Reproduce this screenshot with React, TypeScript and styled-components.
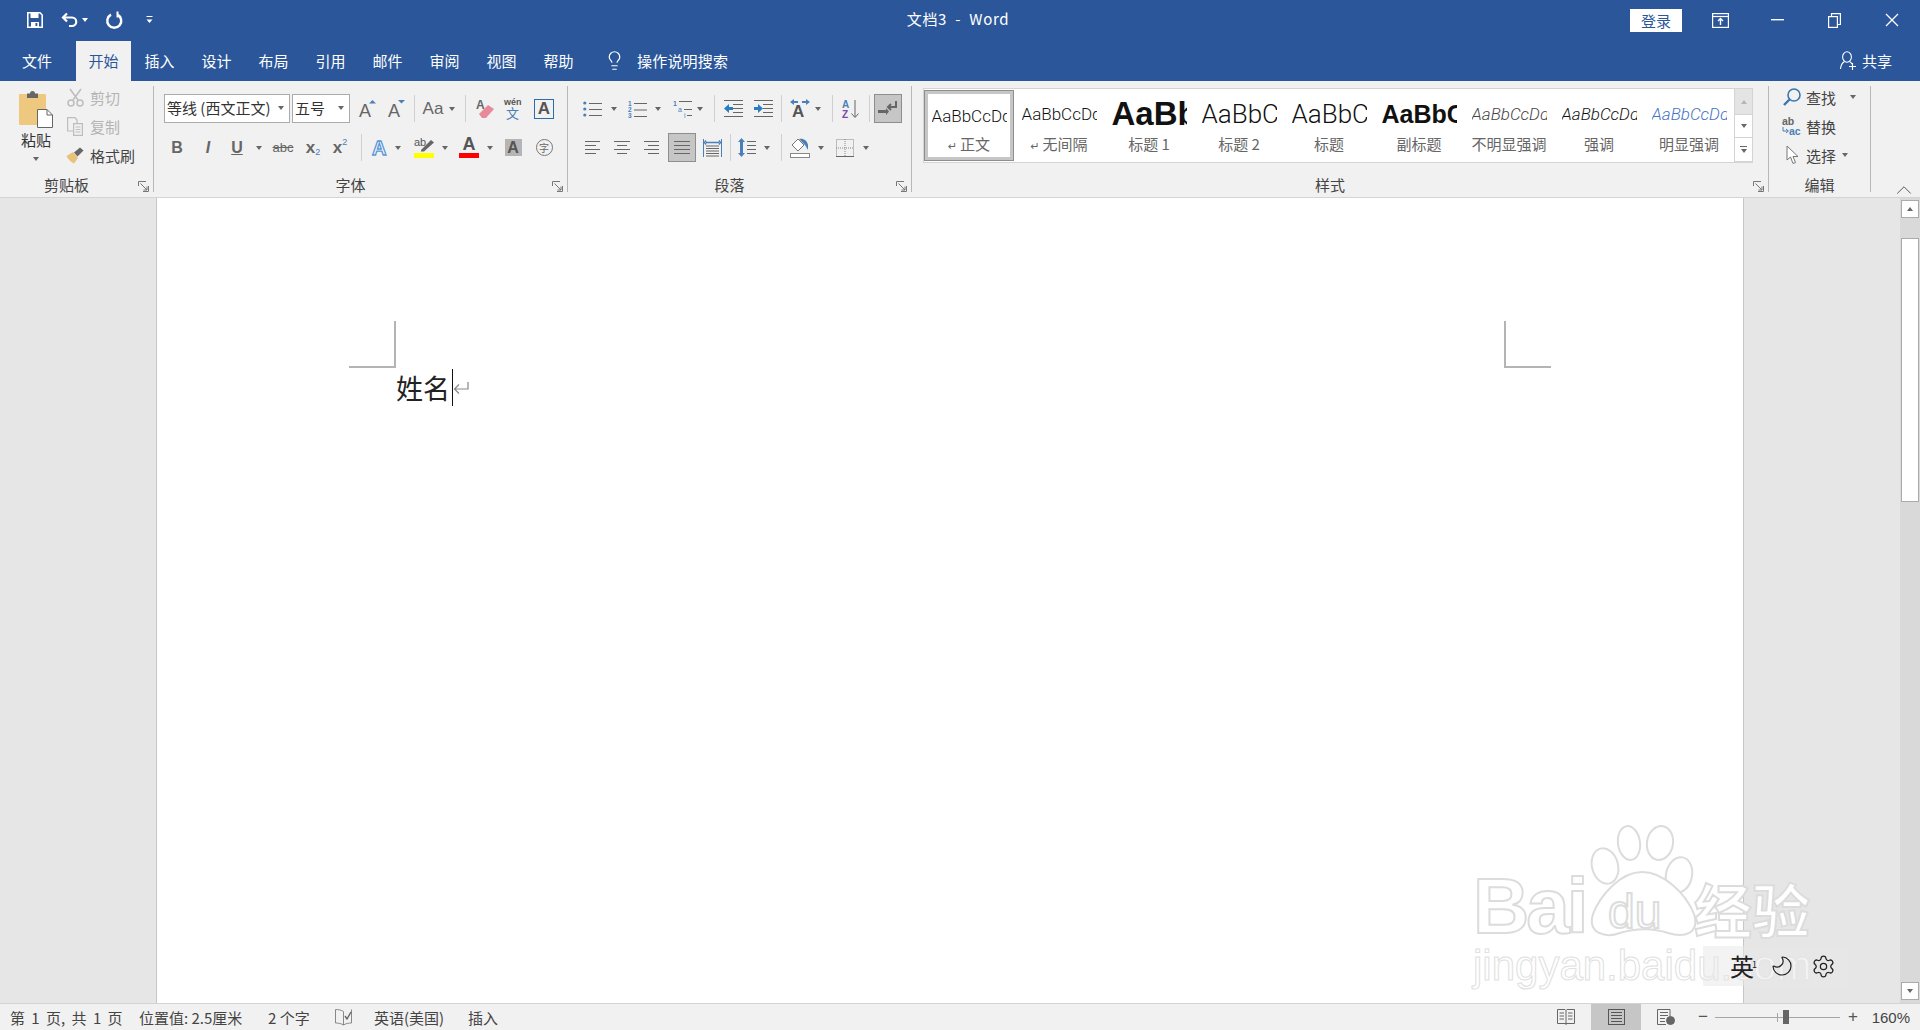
import React from 'react'
import styled, { createGlobalStyle } from 'styled-components'
import { Lightbulb, ChevronUp, Moon, Settings } from 'lucide-react'

const CJK = '"Noto Sans CJK SC", "Liberation Sans", sans-serif'
const LATIN = '"Liberation Sans", "Noto Sans CJK SC", sans-serif'
const GREY = '#666666'
const BLUE = '#4a80b8'

const Global = createGlobalStyle`
  html, body { margin: 0; padding: 0; height: 100%; overflow: hidden; }
  #root { height: 100vh; }
  * { box-sizing: border-box; }
  svg { overflow: visible; }
`

const Shell = styled.div`
  height: 100vh;
  display: flex;
  flex-direction: column;
  font-family: ${CJK};
  font-size: 15px;
  color: #444;
  background: #e6e6e6;
`

/* title bar */
const TitleBar = styled.div`
  height: 40px;
  background: #2b579a;
  color: #fff;
  display: flex;
  align-items: center;
  position: relative;
`
const QatBtn = styled.div<{ $w: number; $ml?: number }>`
  width: ${(p) => p.$w}px;
  margin-left: ${(p) => p.$ml || 0}px;
  display: flex;
  justify-content: center;
  align-items: center;
`
const Title = styled.div`
  position: absolute;
  left: 0;
  top: 9px;
  width: 1916px;
  text-align: center;
  font-size: 15px;
  line-height: 20px;
  font-family: ${CJK};
  letter-spacing: 0.7px;
`
const WindowControls = styled.div`
  margin-left: auto;
  display: flex;
  align-items: center;
`
const SignIn = styled.div`
  width: 52px;
  height: 23px;
  margin-right: 10px;
  background: #fff;
  color: #2b579a;
  display: flex;
  align-items: center;
  justify-content: center;
  font-size: 15px;
`
const WinBtn = styled.div`
  width: 57px;
  display: flex;
  justify-content: center;
`

/* tabs */
const TabRow = styled.div`
  height: 41px;
  background: #2b579a;
  display: flex;
  align-items: flex-end;
  color: #fff;
`
const Tab = styled.div<{ $active?: boolean; $first?: boolean }>`
  width: ${(p) => (p.$first ? 74 : 55)}px;
  margin: ${(p) => (p.$first ? '0 1px 0 0' : p.$active ? '0 0 0 1px' : '0 1px')};
  height: 40px;
  padding-bottom: 2px;
  display: flex;
  align-items: center;
  justify-content: center;
  background: ${(p) => (p.$active ? '#f1f1f1' : 'transparent')};
  color: ${(p) => (p.$active ? '#2b579a' : '#fff')};
`
const Search = styled.div`
  margin-left: 17px;
  height: 40px;
  padding-bottom: 2px;
  display: flex;
  align-items: center;
  gap: 12px;
  letter-spacing: 0.2px;
`
const Share = styled.div`
  margin-left: auto;
  padding-right: 28px;
  height: 40px;
  padding-bottom: 1px;
  display: flex;
  align-items: center;
  gap: 5px;
`

/* ribbon */
const Ribbon = styled.div`
  height: 117px;
  background: #f1f1f1;
  border-bottom: 1px solid #d4d4d4;
  display: flex;
  padding-top: 5px;
`
const Group = styled.div<{ $w: number }>`
  width: ${(p) => p.$w}px;
  height: 106px;
  border-right: 1px solid #b8b8b8;
  display: flex;
  flex-direction: column;
  flex: none;
`
const GroupBody = styled.div<{ $pl?: number; $pt?: number }>`
  flex: 1;
  min-height: 0;
  display: flex;
  padding-left: ${(p) => p.$pl || 0}px;
  padding-top: ${(p) => p.$pt || 0}px;
`
const GroupFoot = styled.div`
  height: 12px;
  display: flex;
  align-items: center;
`
const GroupLabel = styled.div`
  flex: 1;
  text-align: center;
  line-height: 10px;
  height: 12px;
  color: #444;
`
const Launcher = styled.div`
  width: 20px;
  display: flex;
  justify-content: center;
`
const ToolRows = styled.div`
  display: flex;
  flex-direction: column;
  gap: 10px;
`
const ToolRow = styled.div`
  display: flex;
  align-items: center;
  height: 29px;
`
const ToolBtn = styled.div<{ $w: number; $ml?: number; $on?: boolean }>`
  width: ${(p) => p.$w}px;
  height: 29px;
  margin-left: ${(p) => p.$ml || 0}px;
  flex: none;
  display: flex;
  align-items: center;
  justify-content: center;
  background: ${(p) => (p.$on ? '#c6c6c6' : 'transparent')};
  border: ${(p) => (p.$on ? '1px solid #8e8e8e' : 'none')};
`
const CaretBox = styled.div<{ $w?: number; $ml?: number }>`
  width: ${(p) => p.$w || 10}px;
  margin-left: ${(p) => p.$ml || 0}px;
  flex: none;
  display: flex;
  align-items: center;
  justify-content: center;
`
const Caret = styled.span<{ $up?: boolean; $color?: string }>`
  display: block;
  flex: none;
  width: 0;
  height: 0;
  border-left: 3.5px solid transparent;
  border-right: 3.5px solid transparent;
  ${(p) => (p.$up ? 'border-bottom' : 'border-top')}: 4px solid ${(p) => p.$color || GREY};
`
const Sep = styled.div<{ $ml?: number; $mr?: number }>`
  width: 1px;
  height: 27px;
  flex: none;
  margin-left: ${(p) => p.$ml || 0}px;
  margin-right: ${(p) => p.$mr || 0}px;
  background: #cfcfcf;
`
const Combo = styled.div<{ $w: number; $ml?: number }>`
  width: ${(p) => p.$w}px;
  margin-left: ${(p) => p.$ml || 0}px;
  height: 29px;
  flex: none;
  background: #fff;
  border: 1px solid #ababab;
  display: flex;
  align-items: center;
  justify-content: space-between;
  padding: 0 5px 2px 2px;
  white-space: nowrap;
  color: #333;
`
const Glyph = styled.span<{
  $size?: number
  $color?: string
  $bold?: boolean
  $italic?: boolean
  $under?: boolean
  $strike?: boolean
}>`
  font-family: ${LATIN};
  font-size: ${(p) => p.$size || 15}px;
  line-height: 1;
  color: ${(p) => p.$color || GREY};
  font-weight: ${(p) => (p.$bold ? 700 : 400)};
  font-style: ${(p) => (p.$italic ? 'italic' : 'normal')};
  text-decoration: ${(p) => (p.$under ? 'underline' : p.$strike ? 'line-through' : 'none')};
`
const BoxedA = styled.span`
  width: 20px;
  height: 20px;
  border: 1px solid #2b6cab;
  display: flex;
  align-items: center;
  justify-content: center;
  font: 700 17px ${LATIN};
  color: #555;
`
const ShadedA = styled(BoxedA)`
  border: none;
  width: 17px;
  height: 17px;
  background: #b5b5b5;
  font-size: 16px;
`
const ColorA = styled.span`
  display: flex;
  flex-direction: column;
  align-items: center;
  font: 700 18px/15px ${LATIN};
  color: #555;
`
const ColorBar = styled.span<{ $c: string }>`
  width: 20px;
  height: 5px;
  margin-top: 1px;
  background: ${(p) => p.$c};
`
const Ringed = styled.span`
  width: 17px;
  height: 17px;
  border: 1px solid #777;
  border-radius: 50%;
  display: flex;
  align-items: center;
  justify-content: center;
  font-size: 10px;
  color: #666;
`
const SubSup = styled.span<{ $sup?: boolean }>`
  font: 400 9px ${LATIN};
  color: ${BLUE};
  position: relative;
  top: ${(p) => (p.$sup ? -6 : 4)}px;
`

/* clipboard */
const PasteCol = styled.div`
  width: 62px;
  margin-left: 5px;
  padding-top: 4px;
  display: flex;
  flex-direction: column;
  align-items: center;
`
const PasteText = styled.div`
  height: 18px;
  line-height: 18px;
  margin: 3px 0 8px;
  color: #333;
`
const SmallCol = styled.div`
  display: flex;
  flex-direction: column;
  gap: 5px;
`
const SmallRow = styled.div<{ $off?: boolean }>`
  height: 24px;
  padding-bottom: 2px;
  display: flex;
  align-items: center;
  gap: 7px;
  color: ${(p) => (p.$off ? '#b4b4b4' : '#444')};
  white-space: nowrap;
`
const SmallIcon = styled.div`
  width: 16px;
  display: flex;
  justify-content: center;
`

/* styles gallery */
const Gallery = styled.div`
  width: 830px;
  height: 75px;
  margin: 2px 0 0 11px;
  background: #fff;
  border: 1px solid #d4d4d4;
  display: flex;
`
const StyleItem = styled.div<{ $on?: boolean }>`
  width: 90px;
  height: 71px;
  margin-top: 1px;
  flex: none;
  display: flex;
  flex-direction: column;
  align-items: center;
  border: ${(p) => (p.$on ? '4px solid #c6c6c6' : 'none')};
  outline: ${(p) => (p.$on ? '1px solid #8e8e8e' : 'none')};
  outline-offset: -1px;
`
const StylePreview = styled.div<{ $size: number; $bold?: boolean; $italic?: boolean; $color?: string; $on?: boolean }>`
  width: 75px;
  height: ${(p) => (p.$on ? 42 : 46)}px;
  padding-top: 2px;
  flex: none;
  overflow: hidden;
  white-space: nowrap;
  display: flex;
  align-items: center;
  justify-content: flex-start;
  font-family: ${(p) => (p.$bold ? LATIN : 'Roboto, "Liberation Sans", sans-serif')};
  font-size: ${(p) => p.$size}px;
  font-weight: ${(p) => (p.$bold ? 700 : 300)};
  font-style: ${(p) => (p.$italic ? 'italic' : 'normal')};
  color: ${(p) => p.$color || '#111'};
`
const StyleName = styled.div`
  height: 16px;
  line-height: 16px;
  color: #666;
  white-space: nowrap;
  font-size: 15px;
`
const ReturnMark = styled.span`
  font: 11px "DejaVu Sans", sans-serif;
  margin-right: 3px;
`
const GalleryScroll = styled.div`
  width: 18px;
  display: flex;
  flex-direction: column;
`
const GalleryBtn = styled.div<{ $h: number; $off?: boolean }>`
  height: ${(p) => p.$h}px;
  flex: none;
  background: ${(p) => (p.$off ? '#e4e4e4' : '#fff')};
  border-left: 1px solid #d4d4d4;
  border-bottom: 1px solid #d4d4d4;
  display: flex;
  flex-direction: column;
  gap: 2px;
  align-items: center;
  justify-content: center;
`
const MoreBar = styled.span`
  width: 7px;
  height: 1px;
  background: ${GREY};
`

/* editing */
const EditCol = styled(SmallCol)`
  padding-left: 14px;
  color: #444;
`
const EditIcon = styled.div`
  width: 18px;
  display: flex;
  justify-content: center;
`
const EditRow = styled(SmallRow)`
  gap: 5px;
`
const Collapse = styled.div`
  flex: 1;
  display: flex;
  justify-content: center;
  height: 106px;
  padding: 91px 0 0 16px;
`

/* document area */
const Main = styled.div`
  flex: 1;
  min-height: 0;
  display: flex;
  position: relative;
  overflow: hidden;
`
const Workspace = styled.div`
  flex: 1;
  display: flex;
  justify-content: center;
  background: #e6e6e6;
`
const Page = styled.div`
  width: 1588px;
  background: #fff;
  border-left: 1px solid #c6c6c6;
  border-right: 1px solid #c6c6c6;
  padding: 123px 192px 0;
`
const Marks = styled.div`
  display: flex;
  justify-content: space-between;
`
const CropMark = styled.div<{ $right?: boolean }>`
  width: 47px;
  height: 47px;
  border-bottom: 2px solid #b4b4b4;
  ${(p) => (p.$right ? 'border-left' : 'border-right')}: 2px solid #b4b4b4;
`
const Para = styled.div`
  margin: 1px 0 0 47px;
  height: 37px;
  display: flex;
  align-items: center;
`
const Typed = styled.span`
  font-size: 27px;
  line-height: 37px;
  color: #222;
  font-weight: 400;
`
const TextCursor = styled.span`
  width: 1px;
  height: 37px;
  margin-left: 2px;
  background: #111;
`
const ScrollBar = styled.div`
  width: 20px;
  background: #d9d9d9;
  padding: 2px 1px 3px;
  display: flex;
  flex-direction: column;
  align-items: center;
`
const ScrollBtn = styled.div`
  width: 18px;
  height: 18px;
  flex: none;
  background: #fff;
  border: 1px solid #ababab;
  display: flex;
  align-items: center;
  justify-content: center;
`
const ScrollTrack = styled.div`
  flex: 1;
  padding-top: 20px;
`
const ScrollThumb = styled.div`
  width: 18px;
  height: 264px;
  background: #fff;
  border: 1px solid #ababab;
`
const Watermark = styled.svg`
  position: absolute;
  left: 1470px;
  top: 622px;
`
const Ime = styled.div`
  position: absolute;
  left: 1703px;
  top: 748px;
  width: 145px;
  height: 40px;
  background: rgba(232, 232, 232, 0.5);
  display: flex;
  align-items: center;
  color: #222;
  padding-left: 27px;
`
const ImeGlyph = styled.span`
  font-size: 24px;
  line-height: 1;
  width: 42px;
  position: relative;
`
const ImeDigit = styled.sup`
  position: absolute;
  left: 22px;
  top: 6px;
  font-size: 9px;
  line-height: 1;
`
const ImeMoon = styled(Moon)`
  transform: scaleX(-1);
  margin-left: -2px;
`
const ImeGear = styled(Settings)`
  margin-left: 17px;
`

/* status bar */
const StatusBar = styled.div`
  height: 27px;
  background: #f1f1f1;
  border-top: 1px solid #d4d4d4;
  display: flex;
  align-items: stretch;
  padding-left: 10px;
  font-size: 15px;
  color: #444;
`
const StatusItem = styled.div<{ $w: number; $ws?: number }>`
  width: ${(p) => p.$w}px;
  word-spacing: ${(p) => p.$ws || 0}px;
  display: flex;
  align-items: center;
  white-space: pre;
`
const StatusRight = styled.div`
  margin-left: auto;
  display: flex;
  align-items: center;
  padding-right: 10px;
`
const ViewBtn = styled.div<{ $on?: boolean }>`
  width: 50px;
  height: 26px;
  display: flex;
  align-items: center;
  justify-content: center;
  background: ${(p) => (p.$on ? '#c6c6c6' : 'transparent')};
`
const ZoomSign = styled.span<{ $w: number; $ml: number }>`
  width: ${(p) => p.$w}px;
  margin-left: ${(p) => p.$ml}px;
  text-align: center;
  font: 17px ${LATIN};
  color: #555;
`
const Slider = styled.div`
  width: 125px;
  height: 14px;
  margin-left: 6px;
  position: relative;
  &::before {
    content: '';
    position: absolute;
    left: 0;
    right: 0;
    top: 7px;
    height: 1px;
    background: #a6a6a6;
  }
`
const SliderTick = styled.span`
  position: absolute;
  left: 62px;
  top: 3px;
  width: 1px;
  height: 9px;
  background: #a6a6a6;
`
const SliderThumb = styled.span`
  position: absolute;
  left: 68px;
  top: 0;
  width: 6px;
  height: 14px;
  background: #666;
`
const ZoomPct = styled.span`
  width: 50px;
  text-align: right;
  font: 15px ${LATIN};
  color: #444;
`
const MarkerStack = styled.span`
  display: flex;
  flex-direction: column;
  align-items: center;
`

/* drawn icons */
const Tx = ({ x, y, s, c = GREY, b = false, children }: { x: number; y: number; s: number; c?: string; b?: boolean; children: React.ReactNode }) => (
  <text x={x} y={y} fontSize={s} fill={c} fontWeight={b ? 700 : 400} fontFamily="Liberation Sans, sans-serif">
    {children}
  </text>
)

const Lines = ({ rows, w = 18, h = 16, c = GREY }: { rows: [number, number, number][]; w?: number; h?: number; c?: string }) => (
  <svg width={w} height={h} viewBox={`0 0 ${w} ${h}`}>
    {rows.map(([a, b, y], i) => (
      <line key={i} x1={a} x2={b} y1={y + 0.5} y2={y + 0.5} stroke={c} />
    ))}
  </svg>
)

const Launch = () => (
  <svg width="11" height="11" viewBox="0 0 11 11" fill="none" stroke="#777">
    <path d="M10.5 5V10.5H5M0.5 5V.5H8M2.5 2.5L9 9M9 5.5V9H5.5" />
  </svg>
)

const SaveIcon = () => (
  <svg width="16" height="16" viewBox="0 0 16 16">
    <path d="M.8.8H13L15.2 3V15.2H.8Z" fill="none" stroke="#fff" strokeWidth="1.6" />
    <rect x="3.5" y="1" width="8" height="5" fill="#fff" />
    <rect x="4" y="10" width="8" height="5" fill="#fff" />
    <rect x="8.5" y="11" width="1.8" height="3" fill="#2b579a" />
  </svg>
)
const UndoIcon = () => (
  <svg width="17" height="16" viewBox="0 0 17 16" fill="none" stroke="#fff" strokeWidth="2.2">
    <path d="M6 1.5L2 5.5L6 9.5M2 5.5H11A4 4 0 0 1 11 14H8" />
  </svg>
)
const RedoIcon = () => (
  <svg width="18" height="18" viewBox="0 0 18 18" fill="none" stroke="#fff" strokeWidth="2.4">
    <path d="M6 3.6A7 7 0 1 0 12.5 3.6" />
    <path d="M12.5 .5V6.5" strokeWidth="2" />
  </svg>
)
const QatMore = () => (
  <svg width="7" height="8" viewBox="0 0 7 8">
    <rect width="6" height="1" x=".5" fill="#fff" />
    <path d="M.5 3.5H6.5L3.5 7Z" fill="#fff" />
  </svg>
)
const DisplayIcon = () => (
  <svg width="17" height="15" viewBox="0 0 17 15" fill="none" stroke="#fff" strokeWidth="1.2">
    <rect x=".6" y=".6" width="15.8" height="13.8" />
    <path d="M.6 3.5H16.4" />
    <path d="M8.5 12V6M6 8L8.5 5.5L11 8" strokeWidth="1.4" />
  </svg>
)
const MinIcon = () => (
  <svg width="13" height="2">
    <rect width="13" height="1.4" fill="#fff" />
  </svg>
)
const RestoreIcon = () => (
  <svg width="13" height="15" viewBox="0 0 13 15" fill="none" stroke="#fff" strokeWidth="1.2">
    <rect x=".6" y="3.6" width="8.8" height="10.8" />
    <path d="M3.5 3.5V.6H12.4V11.5H9.5" />
  </svg>
)
const CloseIcon = () => (
  <svg width="14" height="14" viewBox="0 0 14 14" stroke="#fff" strokeWidth="1.3">
    <path d="M1 1L13 13M13 1L1 13" />
  </svg>
)
const ShareIcon = () => (
  <svg width="17" height="19" viewBox="0 0 17 19" fill="none" stroke="#fff" strokeWidth="1.1">
    <ellipse cx="7" cy="6" rx="4.4" ry="5.2" />
    <path d="M4.5 10.5C2 12 .8 14.5.5 18M9.5 10.5C10.8 11.2 11.5 12 12 13M9 15.5H16M12.5 12V19" />
  </svg>
)

const PasteIcon = () => (
  <svg width="34" height="38" viewBox="0 0 34 38">
    <rect x="0" y="4" width="27" height="31" rx="1" fill="#edc87e" />
    <path d="M8 3.5H11A2.5 2.5 0 0 1 16 3.5H19V8H8Z" fill="#666" />
    <path d="M18.5 19.5H28L33.5 25V37.5H18.5Z" fill="#fff" stroke="#666" />
    <path d="M28 19.5V25H33.5" fill="none" stroke="#666" />
  </svg>
)
const ScissorIcon = () => (
  <svg width="17" height="19" viewBox="0 0 17 19" fill="none" stroke="#bdbdbd" strokeWidth="1.5">
    <path d="M3 1L11 12M14 1L6 12" />
    <circle cx="4" cy="15" r="3" />
    <circle cx="13" cy="15" r="3" />
  </svg>
)
const CopyIcon = () => (
  <svg width="16" height="19" viewBox="0 0 16 19" fill="none" stroke="#bdbdbd" strokeWidth="1.2">
    <path d="M.6.6H8L10 3V14H.6Z" />
    <path d="M6.6 6.6H15.4V18.4H6.6Z" fill="#f1f1f1" />
    <path d="M8.5 10H13.5M8.5 12.5H13.5M8.5 15H13.5" />
  </svg>
)
const BrushIcon = () => (
  <svg width="18" height="17" viewBox="0 0 18 17">
    <path d="M.5 9L7 5L12 11L8 16.5C5 15 2 12.5.5 9Z" fill="#e9c27a" />
    <path d="M8 5.5L14 .5L17.5 3.5L11.5 9.5Z" fill="#666" />
  </svg>
)
const SizeA = ({ up }: { up?: boolean }) => (
  <svg width="20" height="20" viewBox="0 0 20 20">
    <Tx x={2} y={18} s={18}>A</Tx>
    <path d={up ? 'M12 4.5L15.5 1L19 4.5Z' : 'M12 1H19L15.5 4.5Z'} fill={BLUE} />
  </svg>
)
const ClearIcon = () => (
  <svg width="19" height="20" viewBox="0 0 19 20">
    <Tx x={0} y={10} s={12} b>A</Tx>
    <path d="M3 15L12 6L18 10L10 19H6Z" fill="#e98a9a" />
  </svg>
)
const WenIcon = () => (
  <svg width="18" height="21" viewBox="0 0 18 21">
    <Tx x={0} y={7} s={9} c="#555" b>wén</Tx>
    <text x="2" y="20" fontSize="13" fill={BLUE} fontFamily="Noto Sans CJK SC, sans-serif">文</text>
  </svg>
)
const GlowA = () => (
  <svg width="20" height="21" viewBox="0 0 20 21">
    <text x="2" y="18" fontSize="20" fontWeight="700" fill="#fff" stroke="#5b97d5" strokeWidth="1.3" fontFamily="Liberation Sans, sans-serif">A</text>
  </svg>
)
const MarkerIcon = () => (
  <MarkerStack>
    <svg width="21" height="15" viewBox="0 0 21 15">
      <Tx x={0} y={9} s={11} c="#555">ab</Tx>
      <path d="M7 13L17 3L20 5.5L10 14.5H7Z" fill="#666" />
    </svg>
    <ColorBar $c="#ffff00" />
  </MarkerStack>
)

const BulletIcon = () => (
  <svg width="19" height="16" viewBox="0 0 19 16">
    {[2, 8, 14].map((y) => (
      <g key={y}>
        <circle cx="1.8" cy={y} r="1.6" fill={BLUE} />
        <line x1="6" x2="19" y1={y + 0.5} y2={y + 0.5} stroke={GREY} />
      </g>
    ))}
  </svg>
)
const NumberIcon = () => (
  <svg width="19" height="18" viewBox="0 0 19 18">
    {[1, 2, 3].map((n, i) => (
      <g key={n}>
        <Tx x={0} y={5.5 + i * 6.2} s={6.5} c={BLUE} b>{n}</Tx>
        <line x1="6" x2="19" y1={3.5 + i * 6.5} y2={3.5 + i * 6.5} stroke={GREY} />
      </g>
    ))}
  </svg>
)
const MultiIcon = () => (
  <svg width="19" height="18" viewBox="0 0 19 18">
    <Tx x={0} y={6} s={7} c={BLUE} b>1</Tx>
    <line x1="6" x2="19" y1="1.5" y2="1.5" stroke={GREY} />
    <Tx x={5} y={12} s={7} c={BLUE}>a</Tx>
    <line x1="11" x2="19" y1="9.5" y2="9.5" stroke={GREY} />
    <Tx x={11} y={18} s={7} c={BLUE}>i</Tx>
    <line x1="14" x2="19" y1="15.5" y2="15.5" stroke={GREY} />
  </svg>
)
const IndentIcon = ({ out }: { out?: boolean }) => (
  <svg width="19" height="17" viewBox="0 0 19 17">
    {[0, 16].map((y) => <line key={y} x1="0" x2="19" y1={y + 0.5} y2={y + 0.5} stroke={GREY} />)}
    {[4, 8, 12].map((y) => <line key={y} x1="9" x2="19" y1={y + 0.5} y2={y + 0.5} stroke={GREY} />)}
    <path d={out ? 'M0 8.5L5 4V7H9V10H5V13Z' : 'M9 8.5L4 4V7H0V10H4V13Z'} fill="#2b7cc0" />
  </svg>
)
const DirIcon = () => (
  <svg width="20" height="19" viewBox="0 0 20 19">
    <Tx x={2} y={18} s={17} c="#555" b>A</Tx>
    <path d="M0 3L4 0V2H8V4H4V6ZM20 3L16 0V2H12V4H16V6Z" fill={BLUE} />
  </svg>
)
const SortIcon = () => (
  <svg width="18" height="20" viewBox="0 0 18 20">
    <Tx x={0} y={9} s={10} c={BLUE} b>A</Tx>
    <Tx x={0} y={19} s={10} c="#7a4aa8" b>Z</Tx>
    <path d="M13 1V18M9.5 14.5L13 18.5L16.5 14.5" fill="none" stroke={GREY} />
  </svg>
)
const ReturnIcon = () => (
  <svg width="20" height="15" viewBox="0 0 20 15">
    <path d="M18 0V6H10M13 3L10 6L13 9" fill="none" stroke="#666" strokeWidth="2" />
    <path d="M0 9H8V7L11 10.5L8 14V12H0Z" fill="#666" />
  </svg>
)
const DistIcon = () => (
  <svg width="19" height="18" viewBox="0 0 19 18">
    <path d="M.5 0V18M18.5 0V18" stroke={BLUE} />
    <path d="M3 3.5H16M3 1.5L1.5 3.5L3 5.5M16 1.5L17.5 3.5L16 5.5" fill="none" stroke={BLUE} strokeWidth="1.4" />
    {[7, 9.5, 12, 14.5, 17].map((y) => <line key={y} x1="3" x2="16" y1={y} y2={y} stroke={GREY} />)}
  </svg>
)
const SpacingIcon = () => (
  <svg width="18" height="19" viewBox="0 0 18 19">
    <path d="M3.5 0L7 4H5V15H7L3.5 19L0 15H2V4H0Z" fill={BLUE} />
    {[3, 7, 11, 15].map((y) => <line key={y} x1="9" x2="18" y1={y + 0.5} y2={y + 0.5} stroke={GREY} />)}
  </svg>
)
const ShadeIcon = () => (
  <svg width="20" height="20" viewBox="0 0 20 20">
    <rect x=".5" y="15.5" width="19" height="4" fill="#fff" stroke="#888" />
    <path d="M8 1L14 7L8 13L2 7Z" fill="#fff" stroke="#777" />
    <path d="M9 1C13 0 17 2 18 7L18 12L15 7Z" fill={BLUE} />
  </svg>
)
const BorderIcon = () => (
  <svg width="18" height="18" viewBox="0 0 18 18" fill="none" stroke="#888" strokeDasharray="1 1">
    <rect x=".5" y=".5" width="17" height="17" />
    <path d="M9 0V18M0 9H18" />
    <path d="M0 17.5H18" strokeDasharray="none" stroke="#666" />
  </svg>
)
const FindIcon = () => (
  <svg width="18" height="18" viewBox="0 0 18 18" fill="none">
    <circle cx="11" cy="7" r="6" stroke="#3a76b0" strokeWidth="1.6" />
    <path d="M6.5 11.5L1 17" stroke="#3a76b0" strokeWidth="2.4" />
  </svg>
)
const ReplaceIcon = () => (
  <svg width="20" height="20" viewBox="0 0 20 20">
    <Tx x={0} y={9} s={10.5} c="#666" b>ab</Tx>
    <Tx x={7} y={19} s={10.5} c={BLUE} b>ac</Tx>
    <path d="M1 11V15H6M4 13L6.5 15L4 17" fill="none" stroke={BLUE} />
  </svg>
)
const PointerIcon = () => (
  <svg width="13" height="20" viewBox="0 0 13 20">
    <path d="M1 1V15L4.5 12L7 18.5L9.5 17.5L7 11.5H12Z" fill="#fff" stroke="#777" />
  </svg>
)
const ReturnGlyph = () => (
  <svg width="16" height="16" viewBox="0 0 16 16" fill="none" stroke="#888" strokeWidth="1.2">
    <path d="M15 2V9H1.5M6 4.5L1.5 9L6 13.5" />
  </svg>
)
const ProofIcon = () => (
  <svg width="17" height="17" viewBox="0 0 17 17" fill="none" stroke="#888">
    <path d="M8.5 2.5C6.5 1 3 .5.5.5V14C3 14 6.5 14.5 8.5 16C10.5 14.5 14 14 16.5 14V.5" />
    <path d="M8.5 2.5V16" />
    <path d="M10 7L12 10L16 3" stroke="#666" strokeWidth="1.4" />
  </svg>
)
const ReadIcon = () => (
  <svg width="18" height="16" viewBox="0 0 18 16" fill="none" stroke="#666">
    <path d="M.5.5H8L9 1.5L10 .5H17.5V14.5H.5ZM9 1.5V16" />
    <path d="M2.5 4H7M2.5 7H7M2.5 10H7M11 4H15.5M11 7H15.5M11 10H15.5" />
  </svg>
)
const PrintIcon = () => (
  <svg width="17" height="16" viewBox="0 0 17 16" fill="none" stroke="#555">
    <rect x=".5" y=".5" width="16" height="15" />
    <path d="M3 3.5H14M3 6.5H14M3 9.5H14M3 12.5H14" />
  </svg>
)
const WebIcon = () => (
  <svg width="18" height="16" viewBox="0 0 18 16" fill="none" stroke="#666">
    <path d="M9 15.5H.5V.5H13V8" />
    <path d="M3 3.5H11M3 6.5H11M3 9.5H8M3 12.5H8" />
    <circle cx="13.5" cy="11.5" r="4" fill="#666" />
  </svg>
)

const PREVIEW = 'AaBbCcDd'

const STYLES = [
  { name: '正文', size: 17, text: PREVIEW, mark: true, on: true },
  { name: '无间隔', size: 17, text: PREVIEW, mark: true },
  { name: '标题 1', size: 33, text: 'AaBb', bold: true },
  { name: '标题 2', size: 26, text: 'AaBbC' },
  { name: '标题', size: 26, text: 'AaBbC' },
  { name: '副标题', size: 25, text: 'AaBbC', bold: true },
  { name: '不明显强调', size: 17, text: PREVIEW, italic: true, color: '#444' },
  { name: '强调', size: 17, text: PREVIEW, italic: true },
  { name: '明显强调', size: 17, text: PREVIEW, italic: true, color: '#4472c4' },
]

const TABS = ['插入', '设计', '布局', '引用', '邮件', '审阅', '视图', '帮助']

const Drop = ({ w, ml }: { w?: number; ml?: number }) => (
  <CaretBox $w={w} $ml={ml}>
    <Caret />
  </CaretBox>
)

export default function App() {
  return (
    <Shell>
      <Global />
      <TitleBar>
        <QatBtn $w={16} $ml={27}><SaveIcon /></QatBtn>
        <QatBtn $w={20} $ml={16}><UndoIcon /></QatBtn>
        <QatBtn $w={8} $ml={2}><Caret $color="#fff" /></QatBtn>
        <QatBtn $w={20} $ml={15}><RedoIcon /></QatBtn>
        <QatBtn $w={8} $ml={21}><QatMore /></QatBtn>
        <Title>文档3 &nbsp;-&nbsp; Word</Title>
        <WindowControls>
          <SignIn>登录</SignIn>
          <WinBtn><DisplayIcon /></WinBtn>
          <WinBtn><MinIcon /></WinBtn>
          <WinBtn><RestoreIcon /></WinBtn>
          <WinBtn><CloseIcon /></WinBtn>
        </WindowControls>
      </TitleBar>

      <TabRow>
        <Tab $first>文件</Tab>
        <Tab $active>开始</Tab>
        {TABS.map((t) => (
          <Tab key={t}>{t}</Tab>
        ))}
        <Search>
          <Lightbulb size={21} strokeWidth={1.4} color="#fff" />
          <span>操作说明搜索</span>
        </Search>
        <Share>
          <ShareIcon />
          <span>共享</span>
        </Share>
      </TabRow>

      <Ribbon>
        <Group $w={154}>
          <GroupBody>
            <PasteCol>
              <PasteIcon />
              <PasteText>粘贴</PasteText>
              <Caret />
            </PasteCol>
            <SmallCol>
              <SmallRow $off><SmallIcon><ScissorIcon /></SmallIcon>剪切</SmallRow>
              <SmallRow $off><SmallIcon><CopyIcon /></SmallIcon>复制</SmallRow>
              <SmallRow><SmallIcon><BrushIcon /></SmallIcon>格式刷</SmallRow>
            </SmallCol>
          </GroupBody>
          <GroupFoot><GroupLabel>剪贴板</GroupLabel><Launcher><Launch /></Launcher></GroupFoot>
        </Group>

        <Group $w={414}>
          <GroupBody $pl={10} $pt={8}>
            <ToolRows>
              <ToolRow>
                <Combo $w={126}>等线 (西文正文)<Caret /></Combo>
                <Combo $w={58} $ml={2}>五号<Caret /></Combo>
                <ToolBtn $w={30} $ml={2}><SizeA up /></ToolBtn>
                <ToolBtn $w={28}><SizeA /></ToolBtn>
                <Sep $ml={4} $mr={4} />
                <ToolBtn $w={28}><Glyph $size={17}>Aa</Glyph></ToolBtn>
                <Drop />
                <Sep $ml={8} />
                <ToolBtn $w={38}><ClearIcon /></ToolBtn>
                <ToolBtn $w={18}><WenIcon /></ToolBtn>
                <ToolBtn $w={44}><BoxedA>A</BoxedA></ToolBtn>
              </ToolRow>
              <ToolRow>
                <ToolBtn $w={26}><Glyph $size={16} $bold>B</Glyph></ToolBtn>
                <ToolBtn $w={36}><Glyph $size={16} $bold $italic>I</Glyph></ToolBtn>
                <ToolBtn $w={22}><Glyph $size={16} $bold $under>U</Glyph></ToolBtn>
                <CaretBox $w={22}><Caret /></CaretBox>
                <ToolBtn $w={26}><Glyph $size={13} $strike>abc</Glyph></ToolBtn>
                <ToolBtn $w={34}><Glyph $size={17} $bold>x</Glyph><SubSup>2</SubSup></ToolBtn>
                <ToolBtn $w={20}><Glyph $size={17} $bold>x</Glyph><SubSup $sup>2</SubSup></ToolBtn>
                <Sep $ml={11} />
                <ToolBtn $w={26} $ml={5}><GlowA /></ToolBtn>
                <Drop />
                <ToolBtn $w={32} $ml={5}><MarkerIcon /></ToolBtn>
                <Drop />
                <ToolBtn $w={30} $ml={4}><ColorA>A<ColorBar $c="#ff0000" /></ColorA></ToolBtn>
                <Drop ml={1} />
                <ToolBtn $w={26} $ml={5}><ShadedA>A</ShadedA></ToolBtn>
                <ToolBtn $w={26} $ml={5}><Ringed>字</Ringed></ToolBtn>
              </ToolRow>
            </ToolRows>
          </GroupBody>
          <GroupFoot><GroupLabel>字体</GroupLabel><Launcher><Launch /></Launcher></GroupFoot>
        </Group>

        <Group $w={344}>
          <GroupBody $pl={6} $pt={8}>
            <ToolRows>
              <ToolRow>
                <ToolBtn $w={36}><BulletIcon /></ToolBtn>
                <Drop w={8} />
                <ToolBtn $w={36} $ml={1}><NumberIcon /></ToolBtn>
                <Drop w={6} />
                <ToolBtn $w={30} $ml={6}><MultiIcon /></ToolBtn>
                <Drop w={6} />
                <Sep $ml={11} />
                <ToolBtn $w={30} $ml={3}><IndentIcon out /></ToolBtn>
                <ToolBtn $w={30}><IndentIcon /></ToolBtn>
                <Sep $ml={3} />
                <ToolBtn $w={30} $ml={3}><DirIcon /></ToolBtn>
                <Drop w={6} />
                <Sep $ml={11} />
                <ToolBtn $w={36}><SortIcon /></ToolBtn>
                <Sep />
                <ToolBtn $w={28} $ml={4} $on><ReturnIcon /></ToolBtn>
              </ToolRow>
              <ToolRow>
                <ToolBtn $w={36}><Lines w={15} h={13} rows={[[0, 15, 0], [0, 11, 4], [0, 15, 8], [0, 11, 12]]} /></ToolBtn>
                <ToolBtn $w={24}><Lines w={16} h={13} rows={[[0, 16, 0], [3, 13, 4], [0, 16, 8], [3, 13, 12]]} /></ToolBtn>
                <ToolBtn $w={34}><Lines w={15} h={13} rows={[[0, 15, 0], [4, 15, 4], [0, 15, 8], [4, 15, 12]]} /></ToolBtn>
                <ToolBtn $w={28} $on><Lines w={16} h={13} rows={[[0, 16, 0], [0, 16, 4], [0, 16, 8], [0, 16, 12]]} /></ToolBtn>
                <ToolBtn $w={32}><DistIcon /></ToolBtn>
                <Sep $ml={2} />
                <ToolBtn $w={32}><SpacingIcon /></ToolBtn>
                <Drop w={8} />
                <Sep $ml={10} />
                <ToolBtn $w={36}><ShadeIcon /></ToolBtn>
                <Drop w={6} />
                <ToolBtn $w={28} $ml={7}><BorderIcon /></ToolBtn>
                <Drop w={8} ml={3} />
              </ToolRow>
            </ToolRows>
          </GroupBody>
          <GroupFoot><GroupLabel>段落</GroupLabel><Launcher><Launch /></Launcher></GroupFoot>
        </Group>

        <Group $w={857}>
          <GroupBody>
            <Gallery>
              {STYLES.map((s) => (
                <StyleItem key={s.name} $on={s.on}>
                  <StylePreview $size={s.size} $bold={s.bold} $italic={s.italic} $color={s.color} $on={s.on}>
                    {s.text}
                  </StylePreview>
                  <StyleName>
                    {s.mark && <ReturnMark>↵</ReturnMark>}
                    {s.name}
                  </StyleName>
                </StyleItem>
              ))}
              <GalleryScroll>
                <GalleryBtn $h={26} $off><Caret $up $color="#b5b5b5" /></GalleryBtn>
                <GalleryBtn $h={23}><Caret /></GalleryBtn>
                <GalleryBtn $h={24}><MoreBar /><Caret /></GalleryBtn>
              </GalleryScroll>
            </Gallery>
          </GroupBody>
          <GroupFoot><GroupLabel>样式</GroupLabel><Launcher><Launch /></Launcher></GroupFoot>
        </Group>

        <Group $w={102}>
          <GroupBody>
            <EditCol>
              <EditRow><EditIcon><FindIcon /></EditIcon>查找<CaretBox $w={16} $ml={4}><Caret /></CaretBox></EditRow>
              <EditRow><EditIcon><ReplaceIcon /></EditIcon>替换</EditRow>
              <EditRow><EditIcon><PointerIcon /></EditIcon>选择<CaretBox $w={8} $ml={0}><Caret /></CaretBox></EditRow>
            </EditCol>
          </GroupBody>
          <GroupFoot><GroupLabel>编辑</GroupLabel></GroupFoot>
        </Group>

        <Collapse><ChevronUp size={26} strokeWidth={0.9} color="#555" /></Collapse>
      </Ribbon>

      <Main>
        <Workspace>
          <Page>
            <Marks>
              <CropMark />
              <CropMark $right />
            </Marks>
            <Para>
              <Typed>姓名</Typed>
              <TextCursor />
              <ReturnGlyph />
            </Para>
          </Page>
        </Workspace>
        <ScrollBar>
          <ScrollBtn><Caret $up /></ScrollBtn>
          <ScrollTrack><ScrollThumb /></ScrollTrack>
          <ScrollBtn><Caret /></ScrollBtn>
        </ScrollBar>

        <Watermark width="360" height="175" viewBox="0 0 360 175">
          <g transform="translate(0 10)" fill="#ffffff" stroke="#dcdcdc" strokeWidth="2">
            <text x="3" y="103" fontSize="78" fontWeight="700" fontFamily="Liberation Sans, sans-serif" letterSpacing="-3">Bai</text>
            <ellipse cx="135" cy="36" rx="13" ry="18" transform="rotate(-15 135 36)" />
            <ellipse cx="159" cy="13" rx="11" ry="17" transform="rotate(-8 159 13)" />
            <ellipse cx="190" cy="13" rx="13" ry="17" transform="rotate(10 190 13)" />
            <ellipse cx="209" cy="45" rx="13" ry="18" transform="rotate(12 209 45)" />
            <path d="M172 42C150 42 130 66 123 84C117 104 136 108 150 103C165 98 184 98 198 103C214 108 230 104 224 84C216 64 194 42 172 42Z" />
            <text x="138" y="98" fontSize="48" fontFamily="Liberation Sans, sans-serif">du</text>
            <text x="224" y="103" fontSize="58" fontWeight="700" fontFamily="Noto Sans CJK SC, sans-serif">经验</text>
            <text x="3" y="150" fontSize="42" strokeWidth="1" stroke="#e0e0e0" fontFamily="Liberation Sans, sans-serif">jingyan.baidu.com</text>
          </g>
        </Watermark>
        <Ime>
          <ImeGlyph>英<ImeDigit>1</ImeDigit></ImeGlyph>
          <ImeMoon size={24} strokeWidth={1.2} />
          <ImeGear size={25} strokeWidth={1.2} />
        </Ime>
      </Main>

      <StatusBar>
        <StatusItem $w={129} $ws={3}>第 1 页, 共 1 页</StatusItem>
        <StatusItem $w={129}>位置值: 2.5厘米</StatusItem>
        <StatusItem $w={67}>2 个字</StatusItem>
        <StatusItem $w={39}><ProofIcon /></StatusItem>
        <StatusItem $w={94}>英语(美国)</StatusItem>
        <StatusItem $w={40}>插入</StatusItem>
        <StatusRight>
          <ViewBtn><ReadIcon /></ViewBtn>
          <ViewBtn $on><PrintIcon /></ViewBtn>
          <ViewBtn><WebIcon /></ViewBtn>
          <ZoomSign $w={12} $ml={6}>−</ZoomSign>
          <Slider><SliderTick /><SliderThumb /></Slider>
          <ZoomSign $w={14} $ml={6}>+</ZoomSign>
          <ZoomPct>160%</ZoomPct>
        </StatusRight>
      </StatusBar>
    </Shell>
  )
}
